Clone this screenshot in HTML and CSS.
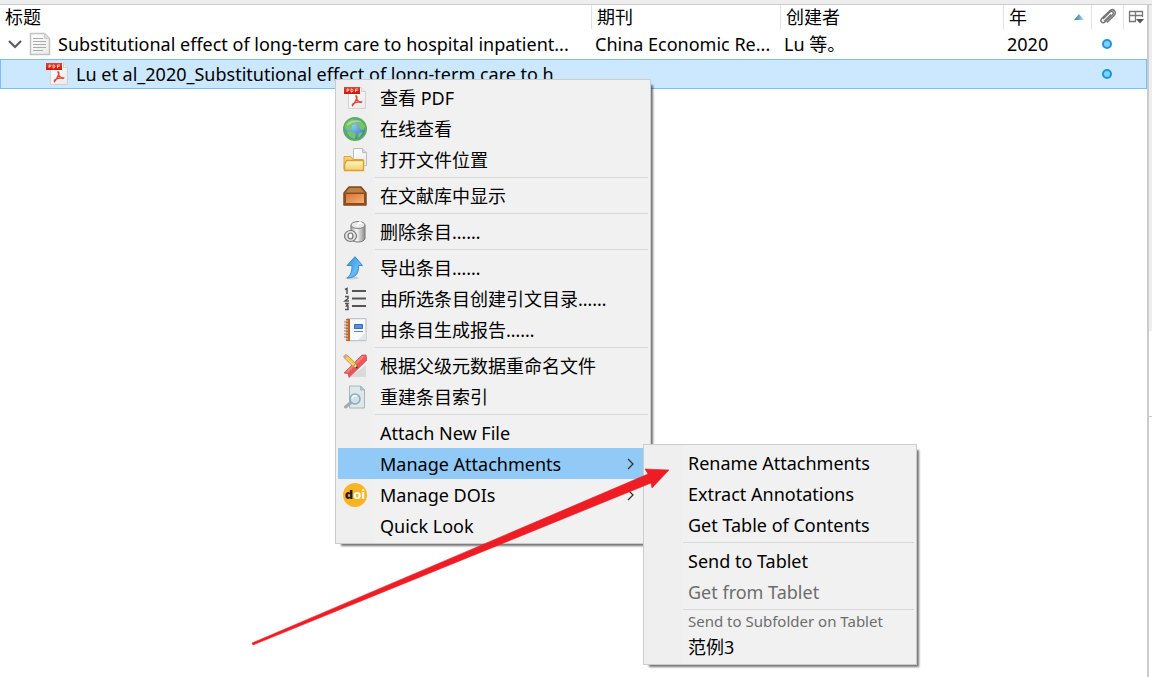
FILE: index.html
```html
<!DOCTYPE html>
<html lang="zh-CN">
<head>
    <meta charset="UTF-8">
    <meta name="viewport" content="width=device-width, initial-scale=1.0">
    <title>文献库</title>
    <link rel="stylesheet" href="styles.css">
</head>
<body>
    <!-- shared icons -->
    <svg class="defs" aria-hidden="true">
        <defs>
            <linearGradient id="red" x1="0" y1="0" x2="0" y2="1">
                <stop offset="0" stop-color="#e8442e"/><stop offset="1" stop-color="#cf1508"/>
            </linearGradient>
            <linearGradient id="paper" x1="0" y1="0" x2="1" y2="1">
                <stop offset="0" stop-color="#fff"/><stop offset="1" stop-color="#e9e9e9"/>
            </linearGradient>
            <radialGradient id="sea" cx=".4" cy=".35" r=".7">
                <stop offset="0" stop-color="#8fccf0"/><stop offset="1" stop-color="#2d72b8"/>
            </radialGradient>
            <linearGradient id="folder" x1="0" y1="0" x2="0" y2="1">
                <stop offset="0" stop-color="#fff6c8"/><stop offset="1" stop-color="#f6cf68"/>
            </linearGradient>
            <linearGradient id="wood" x1="0" y1="0" x2="1" y2="1">
                <stop offset="0" stop-color="#d9742f"/><stop offset="1" stop-color="#f7b27a"/>
            </linearGradient>
            <linearGradient id="metal" x1="0" y1="0" x2="1" y2="0">
                <stop offset="0" stop-color="#a9a9a9"/><stop offset=".4" stop-color="#f7f7f7"/><stop offset="1" stop-color="#8b8b8b"/>
            </linearGradient>
            <linearGradient id="blue" x1="0" y1="0" x2="1" y2="1">
                <stop offset="0" stop-color="#2e8fdc"/><stop offset=".6" stop-color="#63bdf5"/><stop offset="1" stop-color="#2f84cf"/>
            </linearGradient>
            <linearGradient id="sort" x1="0" y1="0" x2="1" y2="0">
                <stop offset="0" stop-color="#3f779f"/><stop offset=".5" stop-color="#6aa5c8"/><stop offset="1" stop-color="#b9e2f4"/>
            </linearGradient>
        </defs>
        <symbol id="icon-pdf" viewBox="0 0 24 24">
            <path d="M5.500 1.500h13l4 4v17h-17z" fill="url(#paper)" stroke="#d2d2d2"/>
            <path d="M18.500 1.500v4h4" fill="#eee" stroke="#cfcfcf"/>
            <path d="M1 1h16v7H1z" fill="url(#red)"/>
            <path d="M4 6V3h1.500q1 .8 0 1.600H4M8 3v3h1q2-1.500 0-3zM12.500 6V3H15M12.500 4.500h2" fill="none" stroke="#fff" stroke-width=".8" opacity=".85"/>
            <path d="M13 10c2 0 .5 5-3.500 9.500-1-2 4-4 9-3.500-1 1.500-5-1-5.500-6z" fill="none" stroke="#df4538" stroke-width="1.400"/>
        </symbol>
    </svg>

    <div class="topbar"></div>
    <main class="window">
        <div class="library">
            <table class="items">
                <colgroup>
                    <col>
                    <col class="col-journal">
                    <col class="col-creator">
                    <col class="col-year">
                    <col class="col-attach">
                    <col class="col-picker">
                </colgroup>
                <thead>
                    <tr>
                        <th scope="col">标题</th>
                        <th scope="col">期刊</th>
                        <th scope="col">创建者</th>
                        <th scope="col">
                            <div class="sorted">年
                                <svg width="12" height="8" viewBox="0 0 12 8"><path d="M1 7l5-6 5 6z" fill="url(#sort)"/></svg>
                            </div>
                        </th>
                        <th scope="col" class="icon-cell" aria-label="附件">
                            <svg width="18" height="18" viewBox="0 0 18 18" fill="none" stroke="#777" stroke-width="1.500"><path d="M4 11l7-7c2-2 4.500.5 2.700 2.500L6.500 13.500C3.500 16.500.3 13 3 10.200L10.500 3c3.500-3.300 8 .8 4.800 4.300L8 14.500"/><path d="M5 13.500l7-7"/></svg>
                        </th>
                        <th scope="col" class="icon-cell">
                            <button class="picker" aria-label="选择列">
                                <svg width="16" height="16" viewBox="0 0 16 16"><path d="M1 2.500h14M1.500 2v10.500M7.500 2v10M14.500 2v6M1 6.500h14M1 12.500h7" fill="none" stroke="#777" stroke-width="1.300"/><path d="M8 10h8l-4 4.500z" fill="#555"/></svg>
                            </button>
                        </th>
                    </tr>
                </thead>
                <tbody>
                    <tr>
                        <td>
                            <div class="title">
                                <button class="twisty" aria-label="折叠">
                                    <svg width="14" height="9" viewBox="0 0 14 9"><path d="M1 1l6 6 6-6" fill="none" stroke="#5c5c5c" stroke-width="2.200"/></svg>
                                </button>
                                <svg width="22" height="24" viewBox="0 0 22 24"><path d="M1.500 1.500h14l5 5v16h-19z" fill="url(#paper)" stroke="#c2c2c2" stroke-width="1.500"/><path d="M15.500 1.500v5h5" fill="#ddd" stroke="#ccc"/><path d="M4 6.500h10M4 9.500h13M4 12.500h13M4 15.500h13M4 18.500h10" stroke="#aaa"/></svg>
                                <span>Substitutional effect of long-term care to hospital inpatient...</span>
                            </div>
                        </td>
                        <td>China Economic Re...</td>
                        <td>Lu 等。</td>
                        <td>2020</td>
                        <td class="icon-cell"><span class="dot"></span></td>
                        <td></td>
                    </tr>
                    <tr class="selected">
                        <td>
                            <div class="title child">
                                <svg width="24" height="24"><use href="#icon-pdf"/></svg>
                                <span>Lu et al_2020_Substitutional effect of long-term care to h</span>
                            </div>
                        </td>
                        <td></td>
                        <td></td>
                        <td></td>
                        <td class="icon-cell"><span class="dot"></span></td>
                        <td></td>
                    </tr>
                </tbody>
            </table>
        </div>
        <aside class="side">
            <div class="side-tabs"></div>
            <div class="side-pane"></div>
        </aside>
    </main>

    <ul class="menu context-menu">
        <li><button><svg class="icon" viewBox="0 0 24 24"><use href="#icon-pdf"/></svg>查看 PDF</button></li>
        <li><button>
            <svg class="icon" viewBox="0 0 24 24"><circle cx="12" cy="12" r="11" fill="url(#sea)" stroke="#5cae54" stroke-width="2"/><path d="M2 8c2-4 5-6 8-6l3 2-1 3-3 1-1 4-4 1-2-2zM13 3c4 0 7 2 9 6l-1 4-4-1-1-3-3-1 2-2zM5 14l5 1 3 2-1 5c-4-1-7-3-8-7zM16 16l4-1-3 5-3 1z" fill="#79c36a"/><path d="M4 7c3-4 11-5 15-2-4-1-10 0-15 4z" fill="#fff" opacity=".35"/></svg>在线查看</button></li>
        <li><button>
            <svg class="icon" viewBox="0 0 24 24"><path d="M10.500 .5h9l4 4v13h-13z" fill="url(#paper)" stroke="#bdbdbd"/><path d="M19.500.5v4h4" fill="#ddd" stroke="#bbb"/><path d="M1 21V8.500h7l2 3h10V21z" fill="#f3d377" stroke="#dba53c"/><path d="M3.500 12.500h17v10h-19v-6z" fill="url(#folder)" stroke="#dba02f" stroke-width="1.400"/></svg>打开文件位置</button></li>
        <li class="separator"></li>
        <li><button>
            <svg class="icon" viewBox="0 0 24 24"><path d="M1 9l5-6h12l5 6v12H1z" fill="#a76734" stroke="#7f4b1e" stroke-width="1.500" stroke-linejoin="round"/><path d="M3 8l4-4h10l4 4z" fill="#bd8049"/><path d="M2.500 9.500h19v10h-19z" fill="url(#wood)" stroke="#8b4b1b"/></svg>在文献库中显示</button></li>
        <li class="separator"></li>
        <li><button>
            <svg class="icon" viewBox="0 0 24 24"><path d="M8 5v14c2 4 12 4 14 0V5z" fill="url(#metal)" stroke="#777"/><ellipse cx="15" cy="5" rx="7" ry="3.500" fill="#e9e9e9" stroke="#808080"/><path d="M14 6l3-4 2 2" fill="none" stroke="#fff" stroke-width="1.500"/><ellipse cx="7.500" cy="16" rx="6" ry="5.500" fill="#e4e4e4" stroke="#787878" stroke-width="1.200"/><ellipse cx="7.500" cy="16" rx="2.500" ry="3" fill="#f5f5f5" stroke="#707070" stroke-width="1.200"/></svg>删除条目……</button></li>
        <li class="separator"></li>
        <li><button>
            <svg class="icon" viewBox="0 0 24 24"><ellipse cx="9" cy="22" rx="7" ry="1.500" fill="#ccc"/><path d="M12 .7l7.500 8.800h-4C16 17 13 22 4 22c4-3 5-7 5-12.500H4z" fill="url(#blue)" stroke="#3a8ccd" stroke-linejoin="round"/></svg>导出条目……</button></li>
        <li><button>
            <svg class="icon" viewBox="0 0 24 24" fill="none" stroke="#555"><path d="M9 4h14M9 11.500h14M9 19h14" stroke-width="2"/><path d="M2 2.500l2-1V7M2 9.500h3v2L2 14h4M2 16.500h3L3.500 19H5v3.500H2" stroke-width="1.500"/></svg>由所选条目创建引文目录……</button></li>
        <li><button>
            <svg class="icon" viewBox="0 0 24 24"><path d="M4 .7h19v22H4z" fill="#f8f9fb" stroke="#b3b8c1"/><path d="M3 1h4v22H3z" fill="#bd642d"/><path d="M1 3h4M1 6h4M1 9h4M1 12h4M1 15h4M1 18h4M1 21h4" stroke="#f0dccd" stroke-width="1.200"/><path d="M1 4h3M1 7h3M1 10h3M1 13h3M1 16h3M1 19h3" stroke="#a5775a"/><path d="M11.500 6.500h8v4h-8z" fill="#5a91dc" stroke="#366db9"/><path d="M11 13.500h9" stroke="#5a86c6"/><path d="M15 22l8-8v8z" fill="#e5e5e5"/></svg>由条目生成报告……</button></li>
        <li class="separator"></li>
        <li><button>
            <svg class="icon" viewBox="0 0 24 24"><path d="M7 23l16-12v12z" fill="#ccc" opacity=".6"/><path d="M19 1h4l1 5L6 23.500l-1-4-4-.5z" fill="#e9575a" stroke="#d0474a" stroke-width=".7"/><path d="M19 2h3L5 18.500 2.500 18z" fill="#f2807f"/><path d="M1 3.500L4 .8l9 9-3 2.700z" fill="#f6c64b" stroke="#9c7430" stroke-width=".6"/><path d="M2 2.600l9 9" stroke="#fbe28e"/><path d="M0 2.500L2.500 0 5 2 2 4.800z" fill="#d99f9a"/><path d="M10 12.500l3-2.700 1.500 4.700z" fill="#f0dcb4" stroke="#9c7430" stroke-width=".5"/><path d="M12.500 13.500l2.300 1.300-.6-2.500z" fill="#222"/></svg>根据父级元数据重命名文件</button></li>
        <li><button>
            <svg class="icon" viewBox="0 0 24 24"><path d="M6.500 1h11l4 4v18h-15z" fill="#dce8ea" stroke="#a3b8bd"/><path d="M17.500 1v4h4z" fill="#b9cacd" stroke="#a3b8bd"/><path d="M7.500 18l-5 4" stroke="#9fabaf" stroke-width="3" stroke-linecap="round"/><circle cx="12" cy="14" r="5" fill="#c9e2ec" stroke="#92a8b2" stroke-width="1.500"/><path d="M9 13.500c1-3 3.500-3.500 5-2" stroke="#fff" stroke-width="1.500" fill="none"/></svg>重建条目索引</button></li>
        <li class="separator"></li>
        <li><button><span class="icon"></span>Attach New File</button></li>
        <li><button class="active" aria-haspopup="true"><span class="icon"></span>Manage Attachments
            <svg class="chevron" viewBox="0 0 8 12"><path d="M1 1l5 5-5 5" fill="none" stroke="#333" stroke-width="1.300"/></svg></button></li>
        <li><button aria-haspopup="true"><span class="icon doi"><b>d</b>oi</span>Manage DOIs
            <svg class="chevron" viewBox="0 0 8 12"><path d="M1 1l5 5-5 5" fill="none" stroke="#333" stroke-width="1.300"/></svg></button></li>
        <li><button><span class="icon"></span>Quick Look</button></li>
    </ul>

    <ul class="menu submenu">
        <li><button><span class="icon"></span>Rename Attachments</button></li>
        <li><button><span class="icon"></span>Extract Annotations</button></li>
        <li><button><span class="icon"></span>Get Table of Contents</button></li>
        <li class="separator"></li>
        <li><button><span class="icon"></span>Send to Tablet</button></li>
        <li><button disabled><span class="icon"></span>Get from Tablet</button></li>
        <li class="separator"></li>
        <li class="caption">Send to Subfolder on Tablet</li>
        <li><button><span class="icon"></span>范例3</button></li>
    </ul>

    <svg class="arrow" width="420" height="180" viewBox="250 467 420 180" aria-hidden="true">
        <path d="M252 643L648 474 645 469 669 470 652 488 651 483 253 645z" fill="#ee1c25" stroke="#ee1c25" stroke-width=".6" stroke-linejoin="round"/>
    </svg>
</body>
</html>
```
FILE: styles.css
```css
* {
    margin: 0;
    padding: 0;
    box-sizing: border-box;
}

body {
    display: flex;
    flex-direction: column;
    min-height: 100vh;
    background: #fff;
    color: #000;
    font-family: "Noto Sans", "Noto Sans CJK SC", sans-serif;
    font-size: 18px;
    line-height: 24px;
}

button {
    border: none;
    background: none;
    color: inherit;
    font: inherit;
}

svg {
    display: block;
    flex-shrink: 0;
}

.defs {
    position: absolute;
    width: 0;
    height: 0;
}

.topbar {
    height: 5px;
    background: #eee;
    border-bottom: 1px solid #ccc;
}

.window {
    flex: 1;
    display: flex;
}

.library {
    flex: 1;
    min-width: 0;
}

/* item list */
.items {
    width: 100%;
    table-layout: fixed;
    border-collapse: collapse;
}

.col-journal { width: 189px; }
.col-creator { width: 223px; }
.col-year { width: 88px; }
.col-attach { width: 32px; }
.col-picker { width: 24px; }

th {
    height: 24px;
    padding: 0 6px;
    font-weight: normal;
    text-align: left;
    box-shadow: inset 1px 0 #e2e2e2;
}

th:first-child {
    padding-left: 5px;
    box-shadow: none;
}

td {
    height: 30px;
    padding: 0 4px;
    white-space: nowrap;
}

th.icon-cell {
    padding: 0 0 0 2px;
}

td.icon-cell {
    padding: 0;
}

.icon-cell > * {
    display: block;
    margin: 0 auto;
}

.sorted {
    display: flex;
    align-items: center;
    justify-content: space-between;
}

.picker {
    width: 16px;
    height: 16px;
}

.title {
    display: flex;
    align-items: center;
    gap: 7px;
    padding-left: 4px;
}

.title.child {
    padding-left: 41px;
}

.twisty {
    width: 14px;
}

.selected {
    background: #cce8ff;
    outline: 1px solid #7abef5;
    outline-offset: -1px;
}

.dot {
    width: 10px;
    height: 10px;
    border: 2px solid #1c93dc;
    border-radius: 50%;
    background: #80d0f8;
}

.side {
    display: flex;
    flex-direction: column;
    width: 5px;
    border-left: 2px solid #ccc;
}

.side-tabs {
    height: 326px;
    background: #eee;
}

.side-pane {
    height: 86px;
    border-bottom: 1px solid #ccc;
}

/* menus */
.menu {
    position: absolute;
    padding: 2px;
    border: 1px solid #ccc;
    background: linear-gradient(to right, #efefef 38px, #f1f1f1 38px);
    box-shadow: 4px 4px 2px -2px rgba(0, 0, 0, 0.55);
    list-style: none;
}

.context-menu {
    left: 335px;
    top: 79px;
    width: 316px;
}

.submenu {
    left: 643px;
    top: 444px;
    width: 274px;
}

.menu button {
    display: flex;
    align-items: center;
    width: 100%;
    height: 31px;
    padding: 0 13px 0 5px;
    text-align: left;
    white-space: nowrap;
}

.menu button:hover,
.menu button.active {
    background: #91c9f7;
}

.menu button:disabled {
    background: none;
    color: #6d6d6d;
}

.icon {
    flex-shrink: 0;
    width: 24px;
    height: 24px;
    margin-right: 13px;
}

.chevron {
    width: 8px;
    height: 12px;
    margin-left: auto;
}

.doi {
    border-radius: 50%;
    background: #fcb425;
    color: #fff;
    font: bold 13px/22px "Noto Sans", sans-serif;
    text-align: center;
}

.doi b {
    color: #231f20;
}

.separator {
    height: 1px;
    margin: 2px 0 2px 37px;
    background: #d7d7d7;
}

.caption {
    height: 19px;
    padding-left: 42px;
    color: #6d6d6d;
    font-size: 15px;
    line-height: 19px;
}

.arrow {
    position: absolute;
    left: 250px;
    top: 467px;
    pointer-events: none;
}
```
